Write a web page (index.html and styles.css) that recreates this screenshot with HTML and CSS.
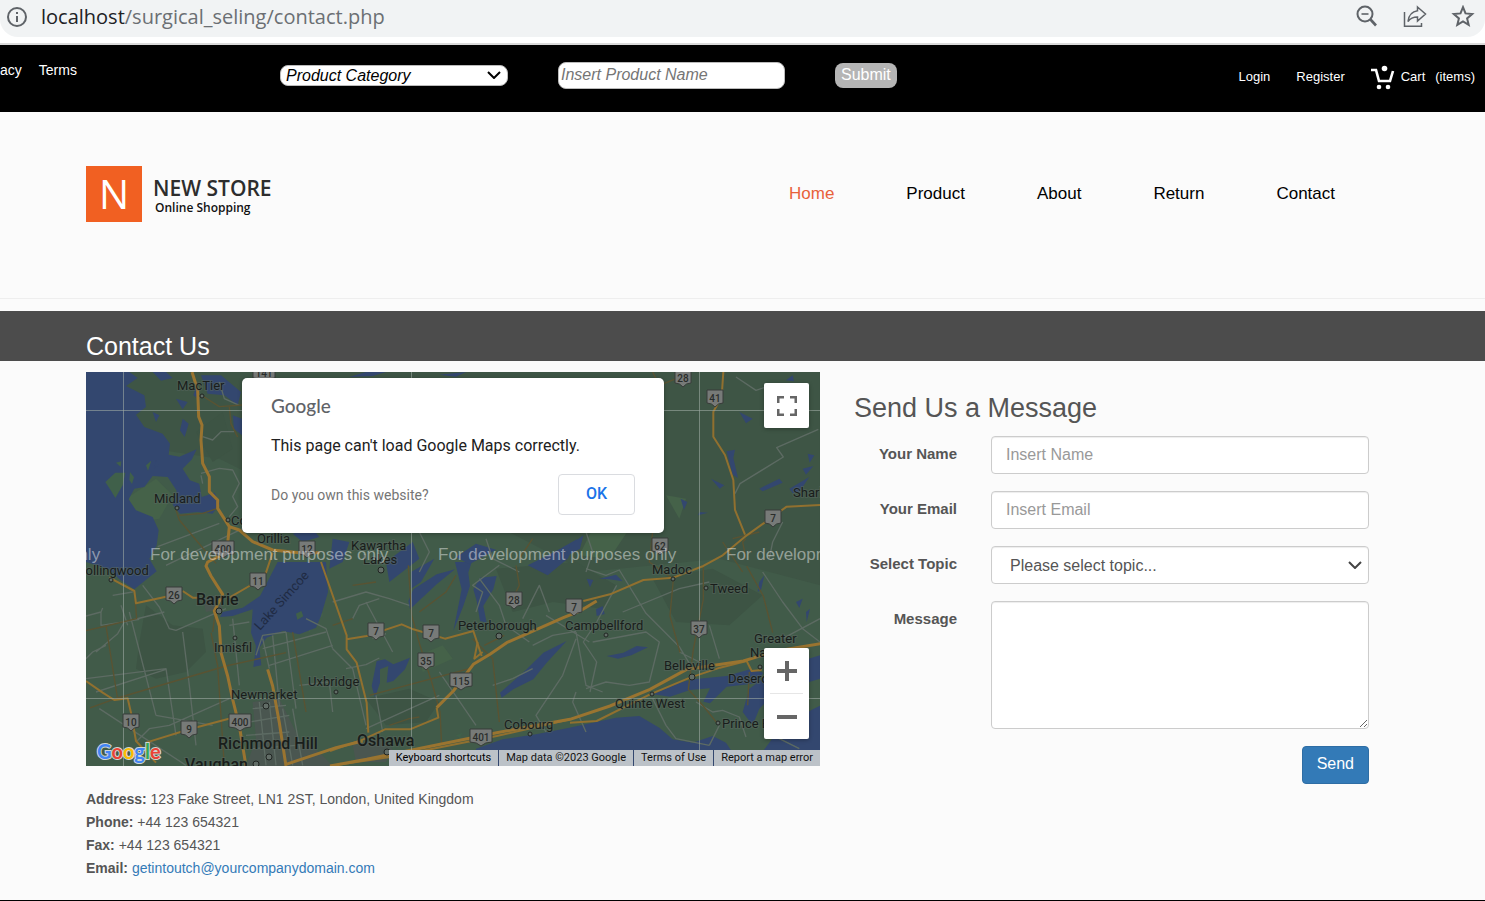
FILE: index.html
```html
<!DOCTYPE html>
<html lang="en">
<head>
<meta charset="utf-8">
<title>Contact Us - New Store</title>
<link rel="stylesheet" href="styles.css">
</head>
<body>
<div class="browser">
  <div class="address">
    <svg class="icon-info" viewBox="0 0 20 20" width="20" height="20" aria-hidden="true"><circle cx="10" cy="10" r="9"/><path d="M10 9v6M10 5v2"/></svg>
    <span class="url"><b>localhost</b>/surgical_seling/contact.php</span>
    <button class="tool" type="button" aria-label="Zoom"><svg viewBox="0 0 24 24" width="24" height="24"><circle cx="10" cy="9" r="7.500"/><path d="M15.500 14.500l5.500 6" stroke-width="2.600"/><path d="M6.500 9h7" stroke-width="1.600"/></svg></button>
    <button class="tool" type="button" aria-label="Share"><svg viewBox="0 0 24 24" width="24" height="24"><path d="M1.500 7v14.200H18.500V18M14.500 2l8 7-8 7v-4c-4 0-7 1-9.500 4.500.8-6 4-10 9.500-10.700z" stroke-width="1.500"/></svg></button>
    <button class="tool" type="button" aria-label="Bookmark"><svg viewBox="0 0 24 24" width="24" height="24"><path d="M12 2.200l2.500 6.200 6.700.6-5.100 4.400 1.600 6.500L12 16.400l-5.700 3.500 1.600-6.500-5.100-4.400 6.700-.6z" stroke-width="2"/></svg></button>
  </div>
</div>

<div class="topbar">
  <nav class="legal"><a href="#">acy</a><a href="#">Terms</a></nav>
  <form class="search">
    <div class="picker">
      <select aria-label="Product category"><option>Product Category</option></select>
      <svg viewBox="0 0 14 8" width="14" height="8" aria-hidden="true"><path d="M1 1l6 6 6-6"/></svg>
    </div>
    <input type="text" placeholder="Insert Product Name" aria-label="Product name">
    <button type="submit">Submit</button>
  </form>
  <nav class="account">
    <a href="#">Login</a>
    <a href="#">Register</a>
    <a class="cart" href="#"><svg viewBox="0 0 24 26" width="24" height="26" aria-hidden="true"><path d="M0 6h5l3 11h11l3-10" fill="none" stroke="#fff" stroke-width="2.600"/><circle cx="13.500" cy="4.500" r="2.800"/><circle cx="8" cy="23" r="2.300"/><circle cx="17" cy="23" r="2.300"/></svg><span>Cart</span><span class="items">(items)</span></a>
  </nav>
</div>

<header class="header">
  <a class="logo" href="#">
    <span class="mark">N</span>
    <span class="name"><strong>NEW STORE</strong><small>Online Shopping</small></span>
  </a>
  <nav class="menu">
    <a class="active" href="#">Home</a><a href="#">Product</a><a href="#">About</a><a href="#">Return</a><a href="#">Contact</a>
  </nav>
</header>

<div class="band"><h1>Contact Us</h1></div>

<main class="content">
  <section>
    <div class="map">
      <svg class="canvas" viewBox="0 0 734 394" preserveAspectRatio="xMidYMid slice" role="img" aria-label="Map">
        <defs>
          <g id="shield"><path d="M-8-8H8V5Q3 5 0 9Q-3 5-8 5Z"/></g>
          <g id="shield-wide"><path d="M-11-8H11V5Q4 5 0 9Q-4 5-11 5Z"/></g>
        </defs>
        <g transform="scale(.33333)">
          <rect class="land" width="2202" height="1182"/>
          <path class="north" d="M0 0H2202V640L1900 560 1500 600 1250 470 900 400 600 360 400 260 0 200Z"/>
          <path class="wood" d="M180 700l80 60 90 10 10 70-60 60-90 20-60-30 10-80zM1230 590l240-20 120 70-40 70-150-20-120 30zM1700 620l180-30 150 80-100 90-160-10zM840 980l130-30 90 40-40 60-120 10zM330 180l80-60 30 110-60 40z"/>
          <path class="field" d="M120 380l90-60 50 50-40 70-70 10zM1520 470l80-60 30 60-60 90-90-10zM1740 370l60 10-20 60zM1000 850l70-30 30 40-90 40zM640 720l60-40 10 50-40 50z"/>
          <path class="urban" d="M500 990l80-10 30 60 30 60 60 40 40 42H480l30-80zM350 680l40-10 20 40-50 10zM800 1120l80-20 40 30-20 40h-90z"/>
        </g>
        <g class="water" transform="scale(.33333)">
          <path d="M0 0H130L155 18 120 42 175 70 180 105 150 128 175 165 230 185 252 215 248 248 280 254 332 232 318 262 290 290 312 325 340 335 347 375 386 362 402 395 380 425 335 420 282 425 260 398 272 356 245 315 200 312 175 345 145 350 128 382 150 415 200 435 218 475 212 520 190 560 212 598 145 652 100 622 70 592 0 570Z"/>
          <path d="M200 0h40l20 18-35 8zM270 80l35 10-15 22zM290 140l18 15-12 40-14-20zM345 10l60 0 60 50-10 40-40-30-50-5zM440 130l28 10v50l-24-20zM330 45l12 40-20-15zM200 120l20 10-10 20zM210 265l8 14-14 10z"/>
          <path d="M575 570H720L726 660 705 732 690 767 640 787 590 777 542 797 520 827 526 880 502 885 510 822 495 782 500 712 440 732 402 735 410 720 470 707 522 672Z"/>
          <path d="M740 500l50 10-20 60-40 20zM900 570l80-60 20 50-90 70zM975 600l70-40-40 70-30 20zM620 485l60-15 20 25-50 15z"/>
          <path d="M872 867l25-5 25 15 50-20-15 35-35 35-20 5 5-50-25 10 0 40-15 45-10-35z"/>
          <path d="M1107 570h50l-10 32 5 40-20 60-30 75 15-75 10-50zM1162 652l20-35 50-5-10 40-30 50 10 50-20-5-10-60zM982 652l70-45 55-15-55 45-80 75-5-25z"/>
          <path d="M1242 962l80-70 50-50 70-35-60 65-40 50-60 30-35 25zM1325 580l80-40 70-40-30 60-60 50z"/>
          <path d="M1170 1130l80-28 100-15 100-20 140-30 70-5 60 35 40 35 60 10 60-20 40 20 40 60 60-20 60-80 100-60 122-60V1182H1170Z"/>
          <path d="M1702 967l80-35 40-10 100-10 70-20 40 10-20 32-90 10-50 50-20-5 20-40-60 5-60 20z"/>
          <path d="M1970 1020l20-70 80-60 132-40v70l-132 40-50 50-20 50zM1562 852l50-10 40-20 34 4-50 24-40 10z"/>
          <path d="M1553 192l40-60 15 8-30 36 8 20zM1922 238l25-5-5 25 14 60-16-10zM1875 320l40 20-14 10zM1784 380l20 10-10 24zM2020 350l60-30 10 12-60 26zM2110 350l60-35-30 45-20 4zM2150 290l32-8-22 26zM2165 245l20 5-14 22zM1840 420l26 2-30 8zM2100 25l20-15 4 18zM2035 50l16-14-4 34zM1960 120l40 20-20 14zM1505 220l30 18-24 2zM1452 520l40-30-10 40-40 22zM1110 555l60-40 60 18-80 44zM790 15l50-15h60l-40 12zM1060 8l80-8-30 14z"/>
          <path d="M2020 630l15-20-10 44-10 5zM2130 690l20-10-10 28zM2160 720l12-10-10 40zM1502 620l20 4-10 22zM1540 620l50-12 20 20-40-6zM1530 712l20-10 6 24-24 6z"/>
        </g>
        <g class="island" transform="scale(.33333)">
          <path d="M58 330l30-28h30l-8 38-22 38-12-20zM90 272l16-4-2 16zM132 300l12 16-6 20-8-12zM180 280l16-14-10 30zM630 725l16-8 6 16-18 10zM1110 1090l20-8-8 16z"/>
        </g>
        <g class="minor" transform="scale(.33333)">
          <path d="M350 194l30 10 25-25h40M345 310l5 25M345 304l55-15 40 5 20 40-20 40 15 30-25 30M215 524L400 454M240 580L470 470M400 30l15 50 45 20"/>
          <path d="M0 732l45-12v40L160 742M30 840l65-55 20-35 120-30M45 720l5-12M105 700l20 60M130 720L210 1030M170 640l50 65 30 65 20 5L420 710M290 780l20 160 20 180M0 920l240-30 30 200M30 960L240 892M150 1110l40-40 60-10 180-80M0 860l20-20 40-20M80 670l60-10M40 1010l260 170M210 1030l170 30"/>
          <path d="M440 740l20 200M430 760l60-10M510 850l20-60 70-10M530 830l190-50M550 880l190-60M530 800l20 90M560 790l20 210M600 780l30 230M640 940l90-10 10 90M660 740l60 30 20 60M500 1010l100-10M490 1050l120-20M480 1090l130-10M500 1130l130-10M520 990l20 190M550 990l20 190M590 1010l30 170M620 1010l30 170"/>
          <path d="M740 690l100-30 70 20 60 20M800 740l20-40 60-20M840 690l80 150M740 830l60 60 40 170M780 890l60-12 40-20M860 800l40-15M870 970l20 110M840 1070L1060 970M1060 900L1170 1060M1220 940l60-20 60-30M1180 620l60 80 20 60 70 50M1240 580l-80 60 30 20-20 60M1310 740L1360 640 1390 720M1340 820l60-30 70-12M1380 730l130 80M1470 800l-40 110-80 120 30 50M1470 780l30 160 50 20"/>
          <path d="M1000 480l30 60-30 60M1200 500l20 60 80 40M1950 15l60 40 60-20M1947 365l15-30 130-80-20-28 125-55M2050 560l10-50 30-60M1500 480l20 60-20 60"/>
          <path d="M1500 590l60 20 40-16 80 130 100 100 30 50M1592 640l-60 110-40 60 40 60-20 90M1610 720L1780 650 1870 630M1520 810l160-30 40 30-30 120-60 10-70-10-60 20M1870 760l30 100M2030 600l60 90 60 80 52 40M2090 800l112-60M1470 960l-10 30 40 90M1780 840l60 30M1700 980l40 80 30 40 100 20M1830 990l50 30 30-5 50 20 20 60M2050 1030l30 70 60 30M1900 1060l-30 60"/>
        </g>
        <g class="brown" transform="scale(.33333)">
          <path d="M345 69l55 35 70-5M430 105l5 50 20 40M270 414l10 30 50 60 60 70M280 430l70-6 45-15M0 776l60-14 92-22-5-60M60 762l35 220M12 1008L95 978 420 882 600 842M375 782l20 100 20 300M380 780l8-60M620 780l40 240"/>
          <path d="M967 580l10 150 25 90 35 110 25 90 5 100M740 760l60-20M800 640l70-10M850 970L1150 890M910 1060l60-20 30-5M1160 800l60 60 20 190M1000 720l80-60 30-50M1290 580l10 60-20 40M1195 820l60-30"/>
          <path d="M1762 622l-10 110 30 110M1852 582v100l-30 150-15 120 45 50 40 50M1982 582l50 90 28 110M1300 560l40-60M1970 600l-60-90M1940 500l80-20M1700 0l20 40 60-24M1460 70l60-30 60 16M1980 560l-10-50 10-10M1700 480l-10 90 70 50M1990 900l-5 100"/>
        </g>
        <g class="road" transform="scale(.33333)">
          <path d="M70 617l75 40 5 37 90-20M290 657l30 20h15M430 677l60-35 50-40 20-60M0 927l50 35 35 22 40-5 10 43 15 85 60 65M180 1112l130-40 130-35M705 570L782 790v42l30 40 30 120 5 90M782 802l60-10 105-35 35 15 95 28 85-23 25 75M2202 399l-100 5L1977 494 1910 550 1852 582 1762 617 1672 624 1572 667 1492 687M1912 0l-5 74-25 45v75l35 55 25 75 5 90 30 74M1452 1052l80-5 160-80 120-50 90-30 80-20 15 30 30-3"/>
          <path d="M1052 1007l5 30-85 35h-75l-65 30-100 35M1190 840l-25 20 10-50M732 1182l200-30 300-60 220-50"/>
        </g>
        <g class="highway" transform="scale(.33333)">
          <path d="M318 0l17 54 3 80 10 25-3 45 5 70 20 40v45l25 25v25l35 55-5 50M430 464l30 10 40 35 60 25 80 8h60M425 510l-20 40-40 20-5 12 15 30 35 55-25 50 15 45 5 80 20 70 15 70 20 80 20 120M545 892l15 50 20 110 20 130M600 1177l150-50 80-20M1052 1007l50-50 60-80 50-30 50-35 170-75 50-20 50-30M732 1182l110-20 390-80 220-40 120-40 120-50 110-60 170-25 100-30 150-25"/>
        </g>
        <g class="grid"><path d="M37.500 0v394M325.500 0v394M613.500 0v394M0 38.500h734M0 326.500h734"/></g>
        <g class="shields">
          <use href="#shield-wide" x="178" y="1"/><use href="#shield-wide" x="137" y="177"/><use href="#shield" x="221" y="177"/><use href="#shield" x="597" y="6"/><use href="#shield" x="629" y="26"/><use href="#shield" x="687" y="146"/><use href="#shield" x="574" y="174"/>
          <use href="#shield" x="88" y="223"/><use href="#shield" x="172" y="209"/><use href="#shield" x="45" y="350"/><use href="#shield" x="103" y="357"/><use href="#shield-wide" x="154" y="350"/>
          <use href="#shield" x="290" y="259"/><use href="#shield" x="345" y="261"/><use href="#shield" x="340" y="289"/><use href="#shield-wide" x="375" y="309"/><use href="#shield" x="428" y="228"/><use href="#shield" x="488" y="235"/><use href="#shield-wide" x="395" y="365"/><use href="#shield" x="613" y="257"/>
        </g>
        <g class="numbers">
          <text x="178" y="5">141</text><text x="137" y="181">400</text><text x="221" y="181">12</text><text x="597" y="10">28</text><text x="629" y="30">41</text><text x="687" y="150">7</text><text x="574" y="178">62</text><text x="88" y="227">26</text><text x="172" y="213">11</text><text x="45" y="354">10</text><text x="103" y="361">9</text><text x="154" y="354">400</text><text x="290" y="263">7</text><text x="345" y="265">7</text><text x="340" y="293">35</text><text x="375" y="313">115</text><text x="428" y="232">28</text><text x="488" y="239">7</text><text x="395" y="369">401</text><text x="613" y="261">37</text>
        </g>
        <g class="dots">
          <circle cx="116" cy="24" r="2"/><circle cx="91" cy="136" r="2"/><circle cx="142" cy="148" r="2"/><circle cx="25" cy="208" r="2"/><circle cx="133" cy="239" r="3"/><circle cx="149" cy="266" r="2"/><circle cx="180" cy="334" r="3"/><circle cx="295" cy="198" r="3"/><circle cx="250" cy="320" r="2"/><circle cx="413" cy="264" r="3"/><circle cx="520" cy="263" r="2"/><circle cx="587" cy="207" r="2"/><circle cx="620" cy="216" r="2"/><circle cx="606" cy="305" r="3"/><circle cx="566" cy="322" r="2"/><circle cx="674" cy="295" r="2"/><circle cx="632" cy="351" r="2"/><circle cx="183" cy="385" r="3"/><circle cx="170" cy="392" r="3"/><circle cx="444" cy="362" r="2"/><circle cx="301" cy="380" r="3"/>
        </g>
        <g class="places">
          <text x="91" y="18">MacTier</text><text x="68" y="131">Midland</text><text x="145" y="153">Co</text><text x="171" y="171">Orillia</text><text x="-9" y="203">Collingwood</text>
          <text x="265" y="178">Kawartha</text><text x="277" y="192">Lakes</text><text x="707" y="125">Sharbot</text><text x="566" y="202">Madoc</text><text x="624" y="221">Tweed</text>
          <text x="128" y="280">Innisfil</text><text x="145" y="327">Newmarket</text><text x="222" y="314">Uxbridge</text><text x="372" y="258">Peterborough</text><text x="479" y="258">Campbellford</text><text x="418" y="357">Cobourg</text>
          <text x="578" y="298">Belleville</text><text x="529" y="336">Quinte West</text><text x="668" y="271">Greater</text><text x="664" y="285">Napanee</text><text x="642" y="311">Deseronto</text><text x="636" y="356">Prince Edward</text>
        </g>
        <text class="lake" transform="translate(174 259) rotate(-48)">Lake Simcoe</text>
        <g class="cities"><text x="110" y="233">Barrie</text><text x="132" y="377">Richmond Hill</text><text x="99" y="398">Vaughan</text><text x="271" y="374">Oshawa</text></g>
        <g class="notice"><text x="-224" y="188">For development purposes only</text><text x="64" y="188">For development purposes only</text><text x="352" y="188">For development purposes only</text><text x="640" y="188">For development purposes only</text></g>
      </svg>
      <div class="google" aria-label="Google"><span class="b">G</span><span class="r">o</span><span class="y">o</span><span class="b">g</span><span class="g">l</span><span class="r">e</span></div>
      <div class="terms"><button type="button">Keyboard shortcuts</button><span>Map data ©2023 Google</span><a href="#">Terms of Use</a><a href="#">Report a map error</a></div>
      <button class="control full" type="button" aria-label="Fullscreen"><svg viewBox="0 0 20 20" width="20" height="20"><path d="M1 7V1h6M13 1h6v6M19 13v6h-6M7 19H1v-6"/></svg></button>
      <div class="control zoom">
        <button type="button" aria-label="Zoom in"><svg viewBox="0 0 20 20" width="20" height="20"><path d="M10 0v20M0 10h20"/></svg></button>
        <button type="button" aria-label="Zoom out"><svg viewBox="0 0 20 20" width="20" height="20"><path d="M0 10h20"/></svg></button>
      </div>
      <div class="dialog" role="dialog" aria-label="Google Maps error">
        <div class="brand">Google</div>
        <p>This page can't load Google Maps correctly.</p>
        <div class="actions"><a href="#">Do you own this website?</a><button type="button">OK</button></div>
      </div>
    </div>
    <address class="details">
      <div><b>Address:</b> 123 Fake Street, LN1 2ST, London, United Kingdom</div>
      <div><b>Phone:</b> +44 123 654321</div>
      <div><b>Fax:</b> +44 123 654321</div>
      <div><b>Email:</b> <a href="#">getintoutch@yourcompanydomain.com</a></div>
    </address>
  </section>
  <section class="message">
    <h2>Send Us a Message</h2>
    <form class="fields">
      <label for="name">Your Name</label><input id="name" type="text" placeholder="Insert Name">
      <label for="email">Your Email</label><input id="email" type="email" placeholder="Insert Email">
      <label for="topic">Select Topic</label>
      <div class="picker">
        <select id="topic"><option>Please select topic...</option></select>
        <svg viewBox="0 0 14 8" width="14" height="8" aria-hidden="true"><path d="M1 1l6 6 6-6"/></svg>
      </div>
      <label for="text">Message</label><textarea id="text"></textarea>
      <button class="send" type="submit">Send</button>
    </form>
  </section>
</main>
<footer class="footer"></footer>
</body>
</html>
```
FILE: styles.css
```css
* { box-sizing: border-box; }
body {
  margin: 0;
  min-height: 100vh;
  display: flex;
  flex-direction: column;
  background: #fbfbfb;
  color: #555;
  font-family: "Liberation Sans", Arial, sans-serif;
  font-size: 16px;
}
a { color: inherit; text-decoration: none; }
button, input, select, textarea { font: inherit; }
button { cursor: pointer; }

/* Drop-down with its own chevron */
.picker { position: relative; }
.picker select { display: block; width: 100%; appearance: none; }
.picker svg { position: absolute; top: 50%; right: 7px; margin-top: -4px; fill: none; stroke: #444; stroke-width: 2; pointer-events: none; }

/* Browser address bar */
.browser { background: #fff; padding-bottom: 6px; border-bottom: 2px solid #dadada; }
.address {
  display: flex;
  align-items: center;
  height: 37px;
  padding: 0 10px 4px 7px;
  background: #f1f3f4;
  border-radius: 0 0 18px 18px;
}
.icon-info { fill: none; stroke: #5f6368; stroke-width: 2; }
.url { flex: 1; margin-left: 14px; font-family: "Open Sans", "Noto Sans", sans-serif; font-size: 20px; line-height: 32px; color: #6b6f73; }
.url b { font-weight: 400; color: #202124; }
.tool { display: flex; padding: 0; margin-left: 24px; border: 0; background: none; }
.tool svg { fill: none; stroke: #5f6368; stroke-width: 2; }

/* Black utility bar */
.topbar { display: flex; height: 67px; padding-right: 10px; background: #000; color: #fff; }
.legal { display: flex; gap: 17px; width: 280px; padding-top: 17px; font-size: 14px; line-height: 16px; }
.search { display: flex; align-items: center; gap: 50px; height: 60px; }
.search select, .search input {
  border: 1px solid #bbb;
  border-radius: 8px;
  background: #fff;
  font-style: italic;
}
.search .picker { width: 228px; }
.search select { height: 21px; padding: 0 5px; color: #000; line-height: 19px; }
.search svg { stroke: #000; }
.search input { width: 227px; height: 27px; padding: 0 2px; }
.search input::placeholder { color: #757575; }
.search button { height: 25px; padding: 0 6px; border: 0; border-radius: 8px; background: #b5b5b5; color: #fff; }
.account { display: flex; align-items: center; gap: 26px; height: 63px; margin-left: auto; font-size: 13px; }
.cart { display: flex; align-items: center; }
.cart svg { margin-right: 6px; fill: #fff; }
.items { margin-left: 10px; }

/* Header */
.header {
  display: flex;
  justify-content: space-between;
  height: 187px;
  padding: 54px 150px 0 86px;
  border-bottom: 1px solid #eee;
}
.logo { display: flex; height: 56px; color: #2d2d2d; font-family: "Open Sans", "Noto Sans", sans-serif; }
.mark { width: 56px; background: #f16022; color: #fff; font-size: 40px; line-height: 56px; text-align: center; }
.name { display: flex; flex-direction: column; padding: 10px 0 0 11px; }
.name strong { font-size: 21px; font-weight: 600; line-height: 24px; }
.name small { padding-left: 2px; font-size: 12px; font-weight: 600; line-height: 16px; color: #111; }
.menu { display: flex; gap: 72px; color: #000; font-size: 17px; line-height: 56px; }
.menu .active { color: #e8613a; }

.band { height: 50px; margin-top: 12px; padding: 20px 86px 0; background: #4c4c4c; overflow: hidden; }
.band h1 { margin: 0; color: #fff; font-size: 25px; font-weight: 400; line-height: 30px; }

.content {
  display: grid;
  grid-template-columns: 734fr 515fr;
  gap: 34px;
  padding: 11px 116px 20px 86px;
}

/* Map */
.map { position: relative; height: 394px; overflow: hidden; font-family: Roboto, sans-serif; }
.canvas { display: block; width: 100%; height: 100%; }
.land { fill: #415b49; }
.north { fill: #3e5545; }
.wood { fill: #3d5444; }
.field { fill: #456249; }
.urban { fill: #4a5650; }
.water { fill: #33476f; }
.island { fill: #40604a; }
.minor, .brown, .road, .highway, .grid { fill: none; stroke-linejoin: round; }
.minor { stroke: #5d6b63; stroke-width: 4; }
.brown { stroke: #5a5332; stroke-width: 4; }
.road { stroke: #91702f; stroke-width: 6; }
.highway { stroke: #9a7430; stroke-width: 9; }
.grid { stroke: #9eaaa4; stroke-opacity: .6; }
.shields { fill: #777a78; stroke: #393d3b; }
.numbers { fill: #2a2d2b; font-size: 10px; font-weight: 500; text-anchor: middle; }
.dots { fill: #626d67; stroke: #202522; }
.places, .cities { fill: #191d1b; stroke: #59675f; stroke-opacity: .5; stroke-width: 2px; paint-order: stroke; }
.places { font-size: 13px; font-weight: 400; }
.cities { font-size: 16px; font-weight: 500; }
.lake { fill: #202b43; font-size: 13px; }
.notice { fill: #fff; fill-opacity: .45; font-family: "Liberation Sans", Arial, sans-serif; font-size: 17px; }

.google {
  position: absolute;
  left: 11px;
  bottom: 3px;
  font-family: Lato, sans-serif;
  font-size: 20px;
  font-weight: 700;
  line-height: 24px;
  -webkit-text-stroke: 2px #cfd6d3;
  paint-order: stroke;
}
.b { color: #4285f4; }
.r { color: #ea4335; }
.y { color: #fbbc04; }
.g { color: #34a853; }
.terms { position: absolute; right: 0; bottom: 0; display: flex; gap: 1px; color: #111; font-size: 11px; line-height: 16px; }
.terms > * { padding: 0 7px; border: 0; background: #bcc2c8; white-space: nowrap; }
.control { position: absolute; right: 11px; width: 45px; border: 0; border-radius: 2px; background: #fff; box-shadow: 0 1px 4px rgba(0, 0, 0, .3); }
.control svg { display: block; fill: none; stroke: #666; stroke-width: 4; }
.full { top: 11px; height: 45px; padding: 0 12px 0 13px; }
.full svg { stroke-width: 3; }
.zoom { bottom: 27px; padding: 0 6px; }
.zoom button { display: flex; align-items: center; justify-content: center; width: 100%; height: 45px; padding: 0; border: 0; background: none; }
.zoom button + button { height: 46px; border-top: 1px solid #e6e6e6; }

.dialog {
  position: absolute;
  top: 6px;
  left: 156px;
  width: 422px;
  padding: 16px 29px 18px;
  border-radius: 5px;
  background: #fff;
  box-shadow: 0 1px 4px rgba(0, 0, 0, .3);
}
.brand { color: #5f6368; font-family: Lato, sans-serif; font-size: 19px; font-weight: 500; line-height: 24px; }
.dialog p { margin: 17px 0 18px; color: #212121; font-size: 16px; line-height: 21px; }
.actions { display: flex; align-items: center; justify-content: space-between; color: #757575; font-size: 14px; }
.actions button { width: 77px; height: 41px; padding-bottom: 3px; border: 1px solid #dadce0; border-radius: 4px; background: #fff; color: #1a73e8; font-size: 16px; font-weight: 500; }

.details { padding-top: 22px; font-size: 14px; font-style: normal; line-height: 23px; }
.details a { color: #337ab7; }

/* Contact form */
.message h2 { margin: 20px 0 11px; color: #555; font-size: 27px; font-weight: 400; line-height: 33px; }
.fields { display: grid; grid-template-columns: 103px 1fr; gap: 17px 34px; }
.fields label { padding-top: 8px; font-size: 15px; font-weight: 700; line-height: 20px; text-align: right; }
.fields input, .fields select, .fields textarea {
  width: 100%;
  height: 38px;
  padding: 0 14px;
  border: 1px solid #ccc;
  border-radius: 4px;
  background: #fff;
  color: #555;
  box-shadow: inset 0 1px 1px rgba(0, 0, 0, .075);
}
.fields select { padding: 0 28px 0 18px; }
.fields textarea { display: block; height: 128px; padding: 7px 14px; resize: both; }
.fields input::placeholder { color: #999; }
.send { grid-column: 2; justify-self: end; height: 38px; padding: 0 14px 2px; border: 1px solid #2e6da4; border-radius: 4px; background: #337ab7; color: #fff; }

.footer { flex: 1; min-height: 1px; background: #000; }
```
